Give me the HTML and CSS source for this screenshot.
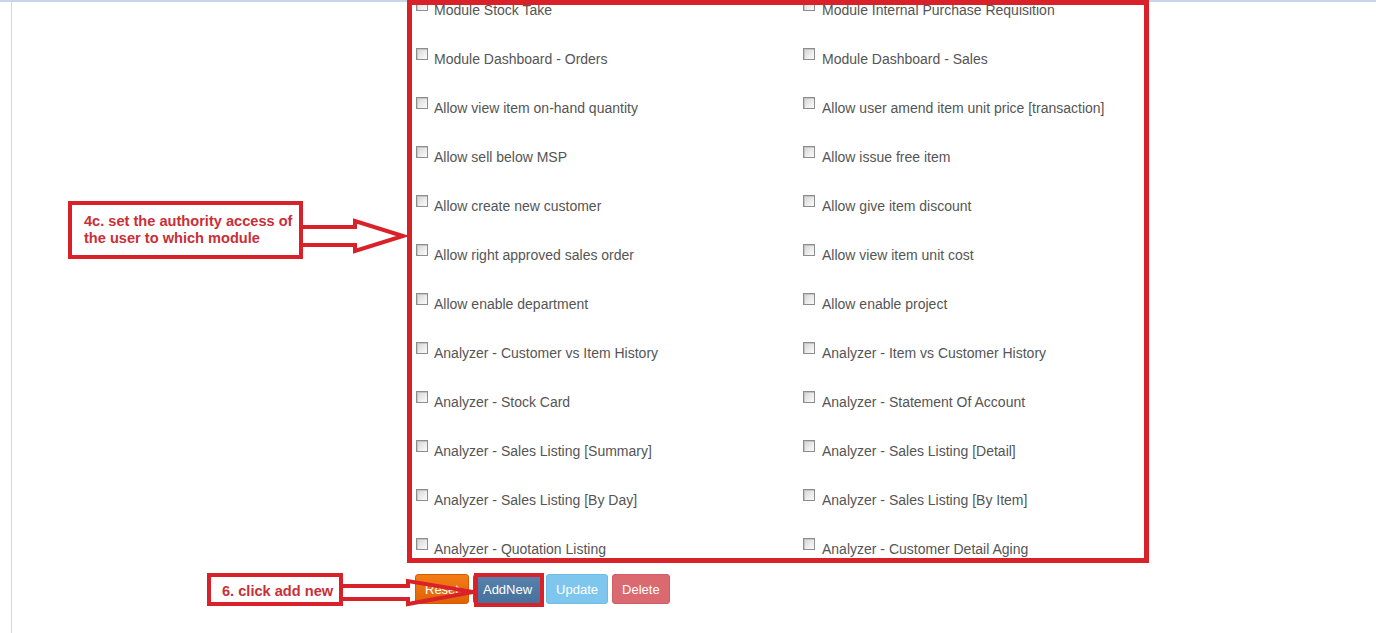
FILE: index.html
```html
<!DOCTYPE html>
<html lang="en">
<head>
<meta charset="utf-8">
<title>User authority</title>
<link rel="stylesheet" href="styles.css">
</head>
<body>
<div class="frame">
  <div class="panel">
    <div class="options">
      <label class="opt"><span class="cb"></span><span>Module Stock Take</span></label>
      <label class="opt"><span class="cb"></span><span>Module Internal Purchase Requisition</span></label>
      <label class="opt"><span class="cb"></span><span>Module Dashboard - Orders</span></label>
      <label class="opt"><span class="cb"></span><span>Module Dashboard - Sales</span></label>
      <label class="opt"><span class="cb"></span><span>Allow view item on-hand quantity</span></label>
      <label class="opt"><span class="cb"></span><span>Allow user amend item unit price [transaction]</span></label>
      <label class="opt"><span class="cb"></span><span>Allow sell below MSP</span></label>
      <label class="opt"><span class="cb"></span><span>Allow issue free item</span></label>
      <label class="opt"><span class="cb"></span><span>Allow create new customer</span></label>
      <label class="opt"><span class="cb"></span><span>Allow give item discount</span></label>
      <label class="opt"><span class="cb"></span><span>Allow right approved sales order</span></label>
      <label class="opt"><span class="cb"></span><span>Allow view item unit cost</span></label>
      <label class="opt"><span class="cb"></span><span>Allow enable department</span></label>
      <label class="opt"><span class="cb"></span><span>Allow enable project</span></label>
      <label class="opt"><span class="cb"></span><span>Analyzer - Customer vs Item History</span></label>
      <label class="opt"><span class="cb"></span><span>Analyzer - Item vs Customer History</span></label>
      <label class="opt"><span class="cb"></span><span>Analyzer - Stock Card</span></label>
      <label class="opt"><span class="cb"></span><span>Analyzer - Statement Of Account</span></label>
      <label class="opt"><span class="cb"></span><span>Analyzer - Sales Listing [Summary]</span></label>
      <label class="opt"><span class="cb"></span><span>Analyzer - Sales Listing [Detail]</span></label>
      <label class="opt"><span class="cb"></span><span>Analyzer - Sales Listing [By Day]</span></label>
      <label class="opt"><span class="cb"></span><span>Analyzer - Sales Listing [By Item]</span></label>
      <label class="opt"><span class="cb"></span><span>Analyzer - Quotation Listing</span></label>
      <label class="opt"><span class="cb"></span><span>Analyzer - Customer Detail Aging</span></label>
    </div>
    <div class="actions">
      <button class="btn btn-reset">Reset</button>
      <button class="btn btn-add">AddNew</button>
      <button class="btn btn-update">Update</button>
      <button class="btn btn-delete">Delete</button>
    </div>
  </div>

  <div class="mark mark-options"></div>
  <div class="mark mark-add"></div>
  <div class="note note-auth">4c. set the authority access of<br>the user to which module</div>
  <div class="note note-add">6. click add new</div>
  <svg class="arrows" width="1376" height="633" viewBox="0 0 1376 633">
    <polyline points="301,227 355,227 355,221 403,236 355,251 355,245 301,245" />
    <polyline points="341,586 408,586 408,581 473,592 408,604 408,599 341,599" />
  </svg>
</div>
</body>
</html>
```
FILE: styles.css
```css
* { box-sizing: border-box; }

html, body {
  margin: 0;
  padding: 0;
  background: #ffffff;
}

body {
  font-family: Arial, "Liberation Sans", Helvetica, sans-serif;
  font-size: 14px;
  color: #555555;
  overflow: hidden;
}

.frame {
  position: relative;
  width: 1376px;
  height: 633px;
  border-top: 2px solid #c7d6e8;
}

.panel {
  margin-left: 11px;
  height: 631px;
  border-left: 1px solid #d6d6d6;
  padding-left: 404px;
  overflow: hidden;
}

.options {
  display: grid;
  grid-template-columns: 387px 387px;
  row-gap: 29px;
  margin-top: -2px;
}

.opt {
  display: flex;
  align-items: flex-start;
  gap: 6px;
  height: 20px;
  line-height: 20px;
  white-space: nowrap;
}

.opt:nth-child(even) {
  gap: 7px;
}

.cb {
  flex: none;
  width: 12px;
  height: 12px;
  margin-top: -1px;
  border: 1px solid #8d8d8d;
  background: linear-gradient(135deg, #d2d2d2 0%, #e9e9e9 50%, #fbfbfb 100%);
  box-shadow: inset 1px 1px 0 #c4c4c4;
}

.actions {
  display: flex;
  gap: 4px;
  margin-top: 15px;
  margin-left: -1px;
}

.btn {
  height: 30px;
  padding: 0 9px;
  font-family: Arial, "Liberation Sans", Helvetica, sans-serif;
  font-size: 13px;
  color: #ffffff;
  border: 1px solid transparent;
  border-radius: 3px;
}

.btn-reset {
  background: linear-gradient(#f47d16, #e06204);
  border-color: #d35c02;
}

.btn-add {
  background: linear-gradient(#5882ad, #47719d);
  border-color: #3f6792;
}

.btn-update {
  background: #7fc6ef;
  border-color: #70bbe6;
}

.btn-delete {
  background: #da6a70;
  border-color: #cf5d63;
}

/* annotation overlays */
.mark {
  position: absolute;
  border: 5px solid #d92129;
}

.mark-options {
  left: 407px;
  top: -2px;
  width: 742px;
  height: 563px;
}

.mark-add {
  left: 474px;
  top: 571px;
  width: 70px;
  height: 34px;
  border-width: 4px;
}

.note {
  position: absolute;
  border: 4px solid #d92129;
  background: #ffffff;
  color: #c92f37;
  font-weight: bold;
  font-size: 14.6px;
  line-height: 17px;
  white-space: nowrap;
}

.note-auth {
  left: 68px;
  top: 199px;
  width: 235px;
  height: 58px;
  padding: 8px 0 0 12px;
}

.note-add {
  left: 207px;
  top: 571px;
  width: 136px;
  height: 33px;
  padding: 6px 0 0 11px;
}

.arrows {
  position: absolute;
  left: 0;
  top: -2px;
  pointer-events: none;
}

.arrows polyline {
  fill: none;
  stroke: #d92129;
  stroke-width: 4;
  stroke-linejoin: miter;
}
```
